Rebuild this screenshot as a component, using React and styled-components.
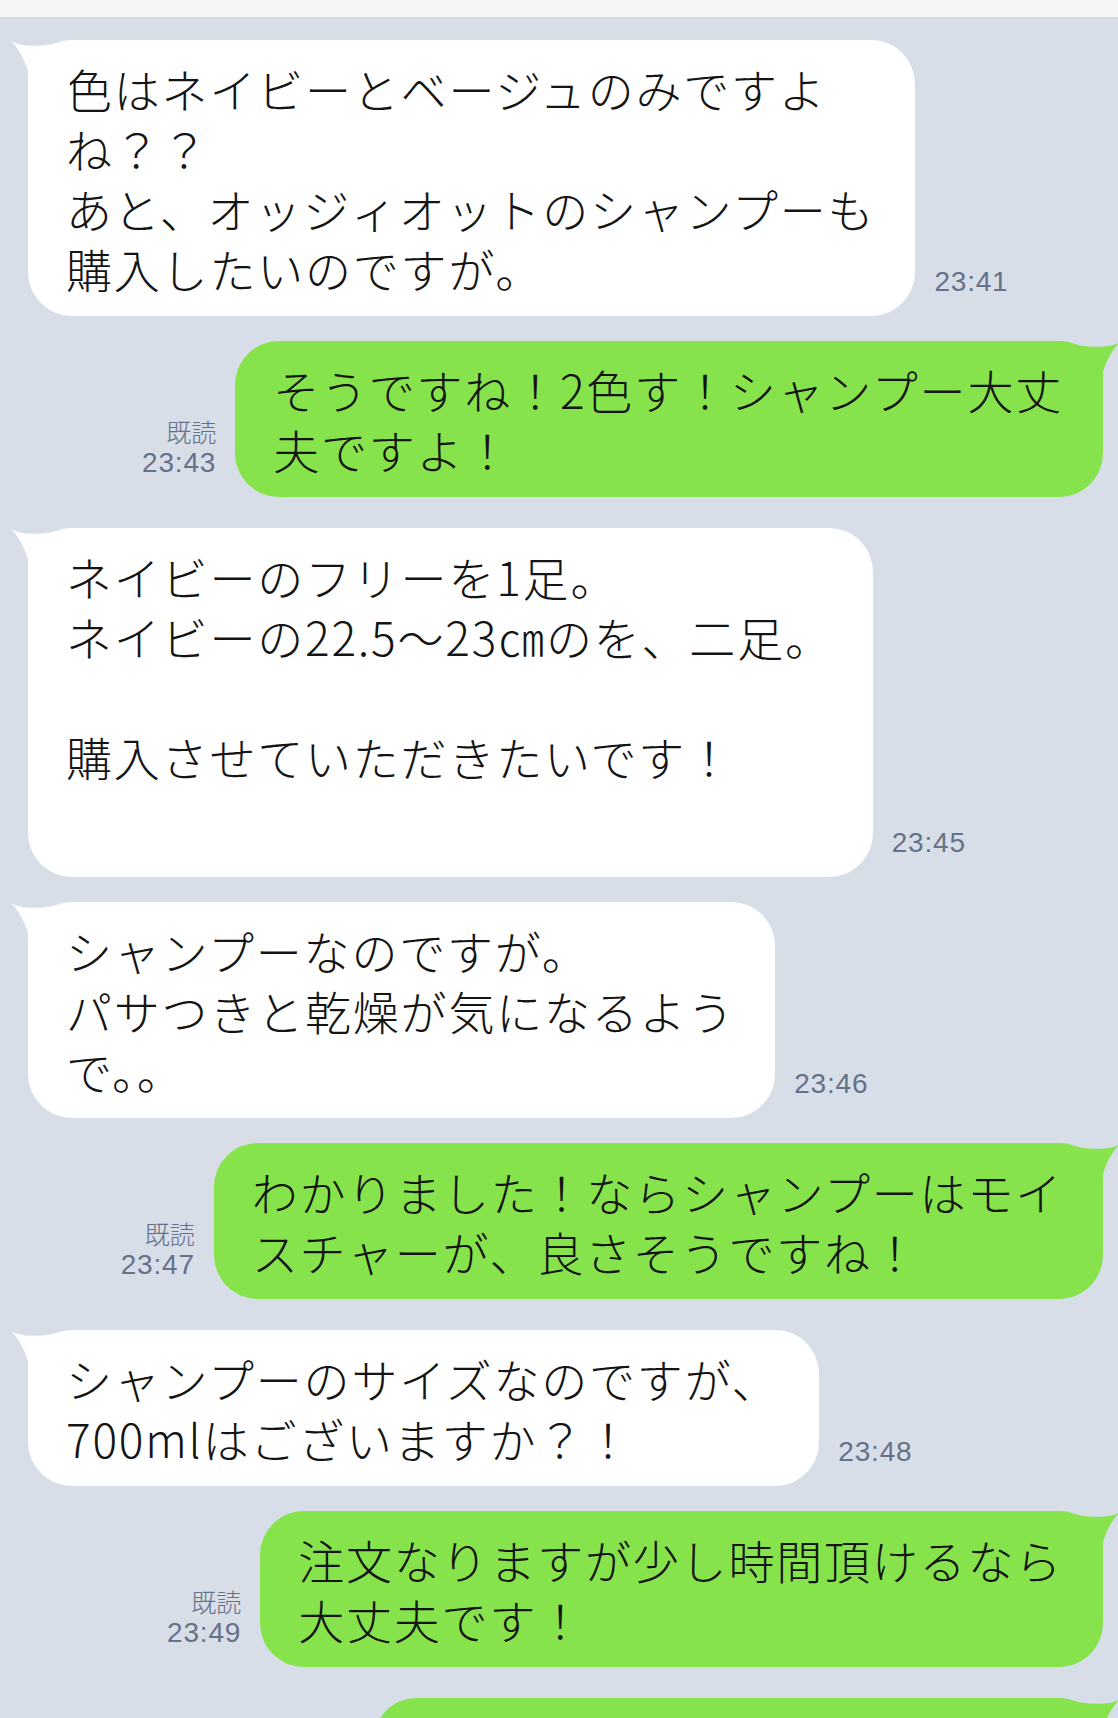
import * as React from "react";
import styled, { createGlobalStyle } from "styled-components";

const GlobalStyle = createGlobalStyle`
  body {
    margin: 0;
    background: #d8dee7;
  }
`;

const Screen = styled.div`
  width: 100vw;
  height: 100vh;
  overflow: hidden;
  display: flex;
  flex-direction: column;
  background: #d8dee7;
`;

const TopBar = styled.div`
  flex: none;
  height: 17px;
  background: #f6f6f6;
  border-bottom: 1px solid #cdd2d9;
`;

const Thread = styled.div`
  display: flex;
  flex-direction: column;
  gap: 25px;
  padding-top: 22px;
`;

const Row = styled.div`
  display: flex;
  align-items: flex-end;
  justify-content: ${(p) => (p.$out ? "flex-end" : "flex-start")};
  gap: 19px;
  padding: ${(p) => (p.$out ? "0 15px 6px 0" : "0 0 0 28px")};
`;

const Bubble = styled.div`
  position: relative;
  background: ${(p) => (p.$out ? "#86e34b" : "#ffffff")};
  border-radius: 44px;
  padding: 18px 40px ${(p) => 18 + (p.$extra || 0)}px 38px;
  font-family: "Noto Sans CJK JP", "Noto Sans", sans-serif;
  font-size: 46px;
  font-weight: 300;
  line-height: 60px;
  letter-spacing: 1.8px;
  color: #141414;
  white-space: pre;
`;

const Tail = styled.svg`
  position: absolute;
  top: 0;
  width: 60px;
  height: 46px;
  ${(p) => (p.$out ? "right: -18px; transform: scaleX(-1);" : "left: -18px;")}
`;

const Meta = styled.div`
  display: flex;
  flex-direction: column;
  align-items: flex-end;
  margin-bottom: 19px;
  color: #66718a;
`;

const ReadMark = styled.span`
  font-family: "Noto Sans CJK JP", sans-serif;
  font-size: 25px;
  font-weight: 300;
  line-height: 33px;
`;

const Time = styled.span`
  font-family: "Liberation Sans", Arial, sans-serif;
  font-size: 28px;
  line-height: 30px;
  letter-spacing: 0.8px;
`;

const messages = [
  { text: "色はネイビーとベージュのみですよ\nね？？\nあと、オッジィオットのシャンプーも\n購入したいのですが。", time: "23:41" },
  { out: true, text: "そうですね！2色す！シャンプー大丈\n夫ですよ！", time: "23:43" },
  { text: "ネイビーのフリーを1足。\nネイビーの22.5〜23㎝のを、二足。\n\n購入させていただきたいです！\n ", time: "23:45", extra: 13 },
  { text: "シャンプーなのですが。\nパサつきと乾燥が気になるよう\nで。。", time: "23:46" },
  { out: true, text: "わかりました！ならシャンプーはモイ\nスチャーが、良さそうですね！", time: "23:47" },
  { text: "シャンプーのサイズなのですが、\n700mlはございますか？！", time: "23:48" },
  { out: true, text: "注文なりますが少し時間頂けるなら\n大丈夫です！", time: "23:49" },
  { out: true, text: "ご注文ありがとうございます!!\nお待ちしております。", time: "23:50" },
];

const BubbleTail = ({ out }) => (
  <Tail $out={out} viewBox="0 0 60 46">
    <path
      d="M1 1 C 10 7, 32 8, 60 0 L 60 46 L 18 46 L 18 31 C 14 18, 8 8, 1 1 Z"
      fill={out ? "#86e34b" : "#ffffff"}
    />
  </Tail>
);

const Message = ({ out, text, time, extra }) => {
  const meta = (
    <Meta>
      {out && <ReadMark>既読</ReadMark>}
      <Time>{time}</Time>
    </Meta>
  );
  return (
    <Row $out={out}>
      {out && meta}
      <Bubble $out={out} $extra={extra}>
        <BubbleTail out={out} />
        {text}
      </Bubble>
      {!out && meta}
    </Row>
  );
};

const App = () => {
  return (
    <>
      <GlobalStyle />
      <Screen>
        <TopBar />
        <Thread>
          {messages.map((m, i) => (
            <Message key={i} {...m} />
          ))}
        </Thread>
      </Screen>
    </>
  );
};

export default App;
